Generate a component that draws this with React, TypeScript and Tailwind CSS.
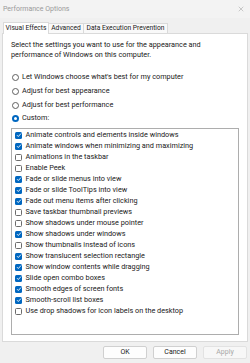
import { X } from "lucide-react";

const effects: [string, boolean][] = [
  ["Animate controls and elements inside windows", true],
  ["Animate windows when minimizing and maximizing", true],
  ["Animations in the taskbar", false],
  ["Enable Peek", false],
  ["Fade or slide menus into view", true],
  ["Fade or slide ToolTips into view", true],
  ["Fade out menu items after clicking", true],
  ["Save taskbar thumbnail previews", false],
  ["Show shadows under mouse pointer", false],
  ["Show shadows under windows", true],
  ["Show thumbnails instead of icons", false],
  ["Show translucent selection rectangle", true],
  ["Show window contents while dragging", true],
  ["Slide open combo boxes", true],
  ["Smooth edges of screen fonts", true],
  ["Smooth-scroll list boxes", true],
  ["Use drop shadows for icon labels on the desktop", false],
];

const radios: [string, boolean][] = [
  ["Let Windows choose what's best for my computer", false],
  ["Adjust for best appearance", false],
  ["Adjust for best performance", false],
  ["Custom:", true],
];

function Radio({ checked }: { checked: boolean }) {
  return checked ? (
    <span className="flex h-[7px] w-[7px] shrink-0 items-center justify-center rounded-full bg-[#0067c0]">
      <span className="h-[3px] w-[3px] rounded-full bg-white" />
    </span>
  ) : (
    <span className="h-[7px] w-[7px] shrink-0 rounded-full border border-[#5f5f5f] bg-white" />
  );
}

function Check({ checked }: { checked: boolean }) {
  return checked ? (
    <span className="flex h-[7px] w-[7px] shrink-0 items-center justify-center rounded-[1.5px] bg-[#0067c0]">
      <svg viewBox="0 0 8 8" className="h-[6px] w-[6px]">
        <path d="M1.3 4.2 L3.1 6 L6.7 2" stroke="white" strokeWidth="1.2" fill="none" />
      </svg>
    </span>
  ) : (
    <span className="h-[7px] w-[7px] shrink-0 rounded-[1.5px] border border-[#6b6b6b] bg-white" />
  );
}

export default function App() {
  return (
    <div className="flex h-[363px] w-[250px] flex-col bg-[#f0f0f0] font-['Roboto',sans-serif] text-[7.3px] text-[#1a1a1a]">
      <div className="flex h-[18px] items-center justify-between bg-[#f3f3f3] pl-[3px] pr-[5px] text-[7px]">
        <span className="text-[#9a9a9a]">Performance Options</span>
        <X className="h-[8px] w-[8px] text-[#9a9a9a]" strokeWidth={1.5} />
      </div>

      <div className="flex h-[15px] items-end pl-[3px] text-[6.7px]">
        <div className="z-10 -mb-px flex h-[12px] w-[46px] items-center justify-center border border-b-0 border-[#dadada] bg-white">
          Visual Effects
        </div>
        <div className="flex h-[10px] w-[35px] items-center justify-center border border-b-0 border-l-0 border-[#dadada] bg-[#f9f9f9]">
          Advanced
        </div>
        <div className="flex h-[10px] w-[84px] items-center justify-center border border-b-0 border-l-0 border-[#dadada] bg-[#f9f9f9]">
          Data Execution Prevention
        </div>
      </div>

      <div className="mx-[2px] flex h-[309px] flex-col border border-[#dadada] bg-white px-[8px] pt-[6px]">
        <p className="leading-[10px]">
          Select the settings you want to use for the appearance and performance of Windows on this
          computer.
        </p>

        <div className="mt-[11px] flex flex-col">
          {radios.map(([label, on]) => (
            <div key={label} className="flex h-[13.7px] items-center gap-[3px] pl-[1px]">
              <Radio checked={on} />
              <span>{label}</span>
            </div>
          ))}
        </div>

        <div className="mt-[2px] h-[207px] border border-[#adadad] pt-[1px]">
          {effects.map(([label, on]) => (
            <div key={label} className="flex h-[11px] items-center gap-[3.5px] pl-[3px]">
              <Check checked={on} />
              <span>{label}</span>
            </div>
          ))}
        </div>
      </div>

      <div className="flex flex-1 items-center justify-end gap-[6px] pr-[3px] text-[7px]">
        <button className="h-[13px] w-[44px] rounded-[2px] border border-[#d0d0d0] bg-[#fdfdfd]">OK</button>
        <button className="h-[13px] w-[44px] rounded-[2px] border border-[#d0d0d0] bg-[#fdfdfd]">Cancel</button>
        <button className="h-[13px] w-[44px] rounded-[2px] border border-[#e2e2e2] bg-[#f7f7f7] text-[#a8a8a8]">
          Apply
        </button>
      </div>
    </div>
  );
}
